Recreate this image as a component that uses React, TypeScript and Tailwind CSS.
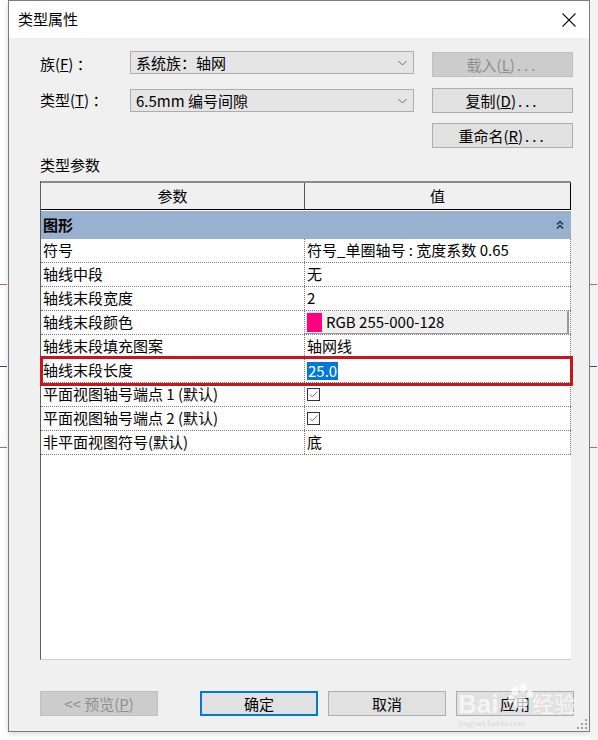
import { Check } from 'lucide-react'

const FONT = "font-['Noto_Sans_CJK_SC',sans-serif]"

const ROWS: { name: string; value: string; kind?: 'color' | 'check' | 'selected' }[] = [
  { name: '符号', value: '符号_单圈轴号 : 宽度系数 0.65' },
  { name: '轴线中段', value: '无' },
  { name: '轴线末段宽度', value: '2' },
  { name: '轴线末段颜色', value: 'RGB 255-000-128', kind: 'color' },
  { name: '轴线末段填充图案', value: '轴网线' },
  { name: '轴线末段长度', value: '25.0', kind: 'selected' },
  { name: '平面视图轴号端点 1 (默认)', value: '', kind: 'check' },
  { name: '平面视图轴号端点 2 (默认)', value: '', kind: 'check' },
  { name: '非平面视图符号(默认)', value: '底' },
]

// background drawing lines peeking out at both sides of the dialog
function SideStrip({ className }: { className: string }) {
  return (
    <div className={className}>
      <svg width="8" height="740" className="block">
        <line x1="0" y1="284.5" x2="7" y2="284.5" stroke="#d0558a" strokeWidth="1" />
        <line x1="0" y1="366.5" x2="7" y2="366.5" stroke="#34489a" strokeWidth="1" />
        <line x1="0" y1="447.5" x2="7" y2="447.5" stroke="#d0558a" strokeWidth="1" />
      </svg>
    </div>
  )
}

function Combo({ text }: { text: string }) {
  return (
    <div className="w-[284px] h-[23px] border border-[#adadad] bg-[#e5e5e5] flex items-center pl-[5px] pr-[6px]">
      <span className="flex-1 text-[15px] leading-none text-black">{text}</span>
      <svg width="9" height="6" viewBox="0 0 9 6">
        <path d="M0.5 1 L4.5 5 L8.5 1" fill="none" stroke="#6b6b6b" strokeWidth="1" />
      </svg>
    </div>
  )
}

function Dots() {
  return <span className="tracking-[3px] ml-[2px]">...</span>
}

function Btn({
  children,
  disabled,
  primary,
  className = '',
}: {
  children: React.ReactNode
  disabled?: boolean
  primary?: boolean
  className?: string
}) {
  const look = disabled
    ? 'bg-[#cccccc] border border-[#bfbfbf] text-[#8f8f8f]'
    : primary
      ? 'bg-[#e1e1e1] border-2 border-[#0078d7] text-black'
      : 'bg-[#e1e1e1] border border-[#adadad] text-black'
  return (
    <div className={`h-[25px] flex items-center justify-center text-[15px] leading-none ${look} ${className}`}>
      {children}
    </div>
  )
}

function CheckBox() {
  return (
    <div className="w-[13px] h-[13px] border border-[#333] bg-white flex items-center justify-center">
      <Check size={11} strokeWidth={1.5} color="#333" />
    </div>
  )
}

export default function App() {
  return (
    <div className={`w-[598px] h-[740px] flex bg-white ${FONT}`}>
      <SideStrip className="w-[8px] bg-white" />

      <div className="w-[582px] h-[732px] border border-[#7c7c7c] flex flex-col shadow-[0_2px_6px_rgba(0,0,0,0.15)]">
        {/* title bar */}
        <div className="h-[37px] bg-white flex items-center pl-[9px] pr-[13px]">
          <span className="flex-1 text-[15px] text-black">类型属性</span>
          <svg width="14" height="14" viewBox="0 0 14 14">
            <path d="M0.5 0.5 L13.5 13.5 M13.5 0.5 L0.5 13.5" stroke="#111" strokeWidth="1.1" />
          </svg>
        </div>

        {/* body */}
        <div className="relative flex-1 bg-[#f0f0f0] pl-[31px] pt-[13px] pb-[15px] flex flex-col">
          <div className="flex h-[26px]">
            <div className="w-[90px] flex items-center text-[15px]">
              族(<span className="underline">F</span>) ：
            </div>
            <Combo text="系统族：轴网" />
            <Btn disabled className="w-[141px] ml-[18px] mt-[1px]">
              载入(<span className="underline">L</span>)<Dots />
            </Btn>
          </div>

          <div className="flex h-[25px] mt-[11px]">
            <div className="w-[90px] flex items-center text-[15px]">
              类型(<span className="underline">T</span>) ：
            </div>
            <div className="mt-[1px]">
              <Combo text="6.5mm  编号间隙" />
            </div>
            <Btn className="w-[141px] ml-[18px]">
              复制(<span className="underline">D</span>)<Dots />
            </Btn>
          </div>

          <div className="flex h-[25px] mt-[10px] pl-[392px]">
            <Btn className="w-[141px]">
              重命名(<span className="underline">R</span>)<Dots />
            </Btn>
          </div>

          <div className="h-[20px] mt-[7px] flex items-center text-[15px] text-black">类型参数</div>

          {/* parameter table */}
          <div className="relative mt-[6px] w-[531px] h-[479px] bg-white border-l border-[#5f5f5f] border-b border-b-[#cfcfcf] text-[15px] text-black">
            <div className="flex h-[29px] bg-[#f0f0f0] border-t-2 border-t-[#8a8a8a] border-b border-b-black">
              <div className="w-[264px] flex items-center justify-center border-r border-[#555]">参数</div>
              <div className="w-[266px] flex items-center justify-center border-r border-black">值</div>
            </div>

            <div className="mt-[1px] h-[28px] bg-[#97b1cf] flex items-center pl-[2px] pr-[7px]">
              <span className="flex-1 font-bold">图形</span>
              <svg width="8" height="10" viewBox="0 0 8 10">
                <path d="M1 4.5 L4 1.5 L7 4.5 M1 8.5 L4 5.5 L7 8.5" fill="none" stroke="#1b2a4a" strokeWidth="1.4" />
              </svg>
            </div>

            {ROWS.map((r) => (
              <div key={r.name} className="flex h-[24px] border-b border-dotted border-[#7a7a7a]">
                <div className="w-[264px] flex items-center pl-[2px] border-r border-dotted border-[#7a7a7a] whitespace-nowrap">
                  {r.name}
                </div>
                <div className="w-[266px] flex items-center pl-[2px] border-r border-dotted border-[#7a7a7a] whitespace-nowrap">
                  {r.kind === 'color' ? (
                    <div className="flex-1 h-[23px] flex items-center bg-[#efefef] border-r-2 border-b border-[#9a9a9a] mr-[1px] -ml-[2px] pl-[2px]">
                      <div className="w-[15px] h-[19px] bg-[#ff0080]" />
                      <span className="ml-[4px]">{r.value}</span>
                    </div>
                  ) : r.kind === 'check' ? (
                    <CheckBox />
                  ) : r.kind === 'selected' ? (
                    <span className="bg-[#0078d7] text-white px-[1px] leading-[18px]">{r.value}</span>
                  ) : (
                    r.value
                  )}
                </div>
              </div>
            ))}

            {/* highlight box around the edited row */}
            <div className="absolute left-[-1px] top-[175px] w-[533px] h-[30px] border-[3px] border-[#c8161e]" />
          </div>

          <div className="flex mt-[31px]">
            <Btn disabled className="w-[118px]">
              &lt;&lt; 预览(<span className="underline">P</span>)
            </Btn>
            <Btn primary className="w-[118px] ml-[42px]">确定</Btn>
            <Btn className="w-[118px] ml-[10px]">取消</Btn>
            <Btn className="w-[118px] ml-[10px]">应用</Btn>
          </div>

          {/* watermark */}
          <div className="absolute left-[447px] top-[645px] w-[120px] h-[50px] pointer-events-none text-white/70">
            <div className="absolute left-[2px] top-[8px] font-['Liberation_Sans',sans-serif] font-bold text-[26px] leading-none">Bai</div>
            <svg className="absolute left-[50px] top-[0px]" width="30" height="30" viewBox="0 0 30 30">
              <g fill="rgba(255,255,255,0.7)">
                <ellipse cx="9" cy="8" rx="3.5" ry="4.5" />
                <ellipse cx="17" cy="5" rx="3.5" ry="4.5" />
                <ellipse cx="24" cy="11" rx="3" ry="4" />
                <ellipse cx="5" cy="16" rx="3" ry="4" />
                <ellipse cx="15" cy="20" rx="7" ry="6" />
              </g>
            </svg>
            <div className="absolute left-[76px] top-[8px] text-[22px] leading-none">经验</div>
          </div>
          <div className="absolute left-[449px] top-[681px] text-[9px] leading-none text-[#d8d8d8] font-['Liberation_Serif',serif] pointer-events-none">
            jingyan.baidu.com
          </div>

          {/* resize grip */}
          <svg className="absolute right-[2px] bottom-[2px]" width="10" height="10" viewBox="0 0 10 10">
            <g fill="#a0a0a0">
              <rect x="8" y="0" width="2" height="2" />
              <rect x="4" y="4" width="2" height="2" />
              <rect x="8" y="4" width="2" height="2" />
              <rect x="0" y="8" width="2" height="2" />
              <rect x="4" y="8" width="2" height="2" />
              <rect x="8" y="8" width="2" height="2" />
            </g>
          </svg>
        </div>
      </div>

      <SideStrip className="w-[8px] bg-[#f4f4f4]" />
    </div>
  )
}
